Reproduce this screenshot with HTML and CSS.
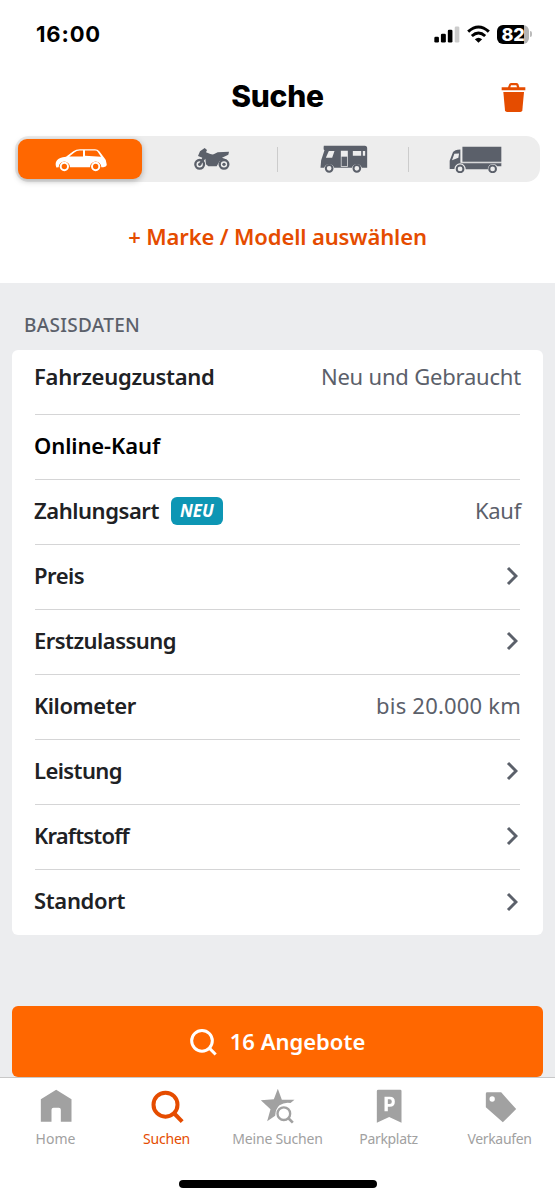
FILE: index.html
```html
<!DOCTYPE html>
<html lang="de">
<head>
<meta charset="utf-8">
<title>Suche</title>
<link rel="stylesheet" href="styles.css">
</head>
<body>
<div class="screen">
  <header class="status">
    <span class="time">16:00</span>
    <div class="signals">
      <svg class="cell" viewBox="104 76 79 51"><rect x="105" y="108" width="14" height="18" rx="4"/><rect x="125" y="99" width="15" height="27" rx="4"/><rect x="146" y="87" width="14" height="39" rx="4"/><rect x="167" y="77" width="14" height="49" rx="4" fill="#ccc"/></svg>
      <svg class="wifi" viewBox="203 74 68 54"><g fill="none" stroke="#000" stroke-width="9"><path d="M206 94Q237 66 268 94"/><path d="M217 107Q237 89 257 107"/></g><path d="M226 117Q237 107 248 117L237 127Z"/></svg>
      <div class="battery"><span class="level">82</span></div>
    </div>
  </header>
  <div class="titlebar">
    <h1>Suche</h1>
    <svg class="trash" viewBox="304 244 75 93"><path d="M306 260H325L329 250Q331 247 335 247H350Q354 247 356 250L359 260H377V269H306ZM332 260H352L350 254H334Z" fill-rule="evenodd"/><path d="M311 274H373L368 329Q367 334 362 334H322Q317 334 316 329Z"/></svg>
  </div>
  <nav class="segments">
    <div class="seg on">
      <svg class="car" viewBox="164 54 156 71"><path d="M168 112Q163 98 170 90Q176 83 197 80L219 63Q227 57 239 57H284Q292 57 297 63L311 82Q320 90 319 105Q318 110 309 111H303A17 17 0 0 0 269 111H209A17 17 0 0 0 175 111ZM207 79H248V61H238Q229 61 222 67ZM254 61V77L302 80L292 65Q290 61 284 61Z" fill-rule="evenodd"/><g class="ring"><circle cx="192" cy="109" r="11"/><circle cx="286" cy="109" r="11"/></g></svg>
    </div>
    <div class="seg">
      <svg class="moto" viewBox="583 54 108 69"><g class="ring heavy"><circle cx="600" cy="103" r="13"/><circle cx="673" cy="103" r="13"/></g><circle cx="600" cy="103" r="5"/><circle cx="673" cy="103" r="5"/><path d="M595 78L601 64L615 54L622 60L619 67L632 72Q640 75 645 71L654 67L688 65L686 74L667 83L682 89L660 93L651 109H626L619 103L617 86L605 103L598 101L608 83Z"/></svg>
    </div>
    <div class="seg split">
      <svg class="camper" viewBox="119 46 143 84"><path d="M130 48H253Q260 48 260 56V114H244A16 16 0 0 0 214 114H161A16 16 0 0 0 131 114H120L122 92L132 62Q128 60 130 48ZM145 64L136 84H155L162 64ZM181 63V111H202V63ZM217 64V78H242V64ZM247 64V78H254V64Z" fill-rule="evenodd"/><path d="M183 81H200V109H183Z"/><g class="ring"><circle cx="146" cy="116" r="10"/><circle cx="229" cy="116" r="10"/></g></svg>
    </div>
    <div class="seg split">
      <svg class="truck" viewBox="506 49 158 80"><path d="M546 51H662V96H546ZM540 59V99H662V109H650A16 16 0 0 0 622 113V118H556A17 17 0 0 0 522 117H508V93L518 67Q522 60 540 59ZM522 72L515 91L534 84L536 71Z" fill-rule="evenodd"/><path d="M543 54V99H662" fill="none" stroke="#ededed" stroke-width="2"/><g class="ring"><circle cx="539" cy="117" r="10"/><circle cx="636" cy="117" r="10"/></g></svg>
    </div>
  </nav>
  <div class="brand"><span>+ Marke / Modell auswählen</span></div>
  <main class="content">
    <h2>BASISDATEN</h2>
    <section class="card">
      <div class="row first"><span class="label zustand">Fahrzeugzustand</span><span class="value condition">Neu und Gebraucht</span></div>
      <div class="row"><span class="label strong">Online-Kauf</span></div>
      <div class="row"><span class="label pay">Zahlungsart</span><span class="badge">NEU</span><span class="value kauf">Kauf</span></div>
      <div class="row"><span class="label preis">Preis</span><svg class="chev" viewBox="0 0 12 20"><path d="M2 2L10 10L2 18"/></svg></div>
      <div class="row"><span class="label erst">Erstzulassung</span><svg class="chev" viewBox="0 0 12 20"><path d="M2 2L10 10L2 18"/></svg></div>
      <div class="row"><span class="label km">Kilometer</span><span class="value dist">bis 20.000 km</span></div>
      <div class="row"><span class="label leist">Leistung</span><svg class="chev" viewBox="0 0 12 20"><path d="M2 2L10 10L2 18"/></svg></div>
      <div class="row"><span class="label kraft">Kraftstoff</span><svg class="chev" viewBox="0 0 12 20"><path d="M2 2L10 10L2 18"/></svg></div>
      <div class="row"><span class="label stand">Standort</span><svg class="chev" viewBox="0 0 12 20"><path d="M2 2L10 10L2 18"/></svg></div>
    </section>
    <div class="cta"><svg class="lens" viewBox="122 90 81 80"><circle cx="158" cy="125" r="31"/><path d="M180 147L199 166"/></svg><span>16 Angebote</span></div>
  </main>
  <nav class="tabs">
    <div class="tab"><svg viewBox="112.5 54 108 108"><path d="M121 88L167 59L213 88V155H181V119Q181 113 175 113H159Q153 113 153 119V155H121Z"/></svg><span>Home</span></div>
    <div class="tab current"><svg viewBox="445.5 54 108 108"><g fill="none" stroke="#e54c00" stroke-width="12"><circle cx="495" cy="104" r="36"/><path d="M520 129L545 155"/></g></svg><span class="tight">Suchen</span></div>
    <div class="tab"><svg viewBox="148.5 54 108 108"><path d="M202 56L214 89H252L240 99Q223 95 207 106Q195 117 194 137L170 154L180 118L151 91L190 88Z"/><g fill="none" stroke="#a1a1a1"><circle cx="220" cy="131" r="19" stroke-width="7"/><path d="M233 144L247 158" stroke-width="8"/></g></svg><span class="tight">Meine Suchen</span></div>
    <div class="tab"><svg viewBox="481.5 54 108 108"><path d="M504 59H569Q573 59 573 63V158L536 141L499 158V63Q499 59 504 59ZM522 80V124H532V110H538Q553 110 553 95Q553 80 538 80ZM532 88H537Q544 88 544 95Q544 102 537 102H532Z" fill-rule="evenodd"/></svg><span class="tighter">Parkplatz</span></div>
    <div class="tab"><svg viewBox="814.5 54 108 108"><path d="M830 67H872L917 117L877 157L826 112V71Q826 67 830 67ZM845 79A8 8 0 1 0 845 95A8 8 0 1 0 845 79Z" fill-rule="evenodd"/></svg><span class="tighter">Verkaufen</span></div>
  </nav>
  <footer class="home-bar"><div class="pill"></div></footer>
</div>
</body>
</html>
```
FILE: styles.css
```css
* { box-sizing: border-box; }
body { margin: 0; background: #fff; font-family: "Noto Sans", sans-serif; }
svg { display: block; flex: none; }
h1, h2 { margin: 0; }
.screen { width: 555px; height: 1200px; display: flex; flex-direction: column; overflow: hidden; }

.status { height: 68px; display: flex; justify-content: space-between; align-items: center; padding: 0 22px 0 36px; font-family: Inter, sans-serif; }
.time { font-size: 22px; font-weight: 700; letter-spacing: 0.85px; }
.signals { display: flex; align-items: center; gap: 7px; }
.cell { width: 26px; height: 17px; }
.wifi { width: 23px; height: 18px; }
.battery { width: 36px; height: 19px; display: flex; align-items: center; }
.level { width: 32px; height: 19px; border-radius: 6px; background: linear-gradient(90deg, #000 27px, #b5b5b5 27px); color: #fff; font-size: 18px; line-height: 19px; font-weight: 800; text-align: center; letter-spacing: -0.3px; }
.battery::after { content: ""; width: 2px; height: 6px; margin-left: 1px; border-radius: 0 3px 3px 0; background: #bbb; }

.titlebar { height: 68px; display: grid; grid-template-columns: 1fr auto 1fr; align-items: center; padding: 0 29px 10px; }
.titlebar h1 { grid-column: 2; padding-bottom: 3px; font: 800 30px/40px Inter, sans-serif; letter-spacing: -0.3px; }
.trash { justify-self: end; width: 25px; height: 31px; fill: #e54c00; }

.segments { height: 46px; margin: 0 15px; border-radius: 14px; background: #ededed; display: grid; grid-template-columns: repeat(4, 1fr); }
.seg { display: flex; align-items: center; justify-content: center; position: relative; }
.seg svg { fill: #5b606a; }
.seg.on { margin: 3px 4px 3px 3px; border-radius: 9px; background: #ff6700; box-shadow: 0 2px 6px rgba(0,0,0,.28); }
.seg.on svg { fill: #fff; }
.ring { fill: none; stroke: #5b606a; stroke-width: 6; }
.on .ring { stroke: #fff; }
.heavy { stroke-width: 7; }
.split::before { content: ""; position: absolute; left: -1px; top: 11px; width: 1px; height: 25px; background: #ccc; }
.car { width: 52px; height: 24px; margin: 2px 0 0 1px; }
.moto { width: 36px; height: 23px; }
.camper { width: 48px; height: 28px; margin-left: 1px; }
.truck { width: 53px; height: 27px; margin: 1px 0 0 2px; }

.brand { height: 101px; padding-top: 38px; text-align: center; color: #e54c00; font-size: 22px; font-weight: 600; line-height: 32px; letter-spacing: -0.13px; }

.content { height: 794px; background: #ecedef; padding: 27px 12px 0; display: flex; flex-direction: column; }
.content h2 { height: 40px; padding-left: 12px; font-size: 19px; line-height: 30px; font-weight: 500; color: #5b606a; letter-spacing: 0.3px; }
.card { background: #fff; border-radius: 6px; height: 585px; padding: 0 23px; }
.row { height: 65px; display: flex; align-items: center; border-bottom: 1px solid #d5d5d6; }
.row:last-child { border: 0; }
.row.first { padding-bottom: 7px; }
.label { padding-bottom: 4px; font-size: 22px; font-weight: 600; color: #202124; margin-left: -1px; white-space: nowrap; }
.zustand { letter-spacing: -0.28px; }
.strong { color: #000; letter-spacing: -0.1px; }
.pay { letter-spacing: -0.45px; }
.preis { letter-spacing: -0.5px; }
.erst { letter-spacing: -0.53px; }
.km { letter-spacing: -0.42px; }
.leist { letter-spacing: -0.6px; }
.kraft { letter-spacing: -0.8px; }
.stand { letter-spacing: -0.33px; }
.value { margin-left: auto; margin-right: -1px; padding-bottom: 4px; font-size: 22px; color: #5b606a; white-space: nowrap; }
.condition { letter-spacing: -0.2px; }
.kauf { letter-spacing: -0.25px; }
.dist { letter-spacing: 0.2px; }
.badge { margin: 0 0 2px 12px; width: 52px; height: 28px; border-radius: 6px; background: #0d96b4; color: #fff; font-size: 17px; font-weight: 700; font-style: italic; line-height: 27px; text-align: center; }
.chev { width: 12px; height: 20px; margin: 0 2px 1px auto; fill: none; stroke: #5b606a; stroke-width: 3; }

.cta { margin-top: 71px; height: 72px; border-radius: 6px; background: #ff6700; color: #fff; display: flex; align-items: center; justify-content: center; gap: 13px; font: 600 22px/30px "Noto Sans", sans-serif; }
.lens { width: 27px; height: 27px; margin-top: 3px; fill: none; stroke: #fff; stroke-width: 9; }

.tabs { height: 91px; padding-top: 10px; border-top: 1px solid #c8c8c8; background: #fff; display: grid; grid-template-columns: repeat(5, 1fr); color: #a1a1a1; }
.tab { display: flex; flex-direction: column; align-items: center; font-size: 14px; line-height: 20px; gap: 5px; white-space: nowrap; }
.tab svg { width: 36px; height: 36px; fill: #a1a1a1; }
.tight { letter-spacing: -0.2px; }
.tighter { letter-spacing: -0.33px; }
.tab.current { color: #e54c00; }
.home-bar { display: flex; justify-content: center; padding-top: 12px; }
.pill { width: 198px; height: 8px; border-radius: 4px; background: #000; }
```
